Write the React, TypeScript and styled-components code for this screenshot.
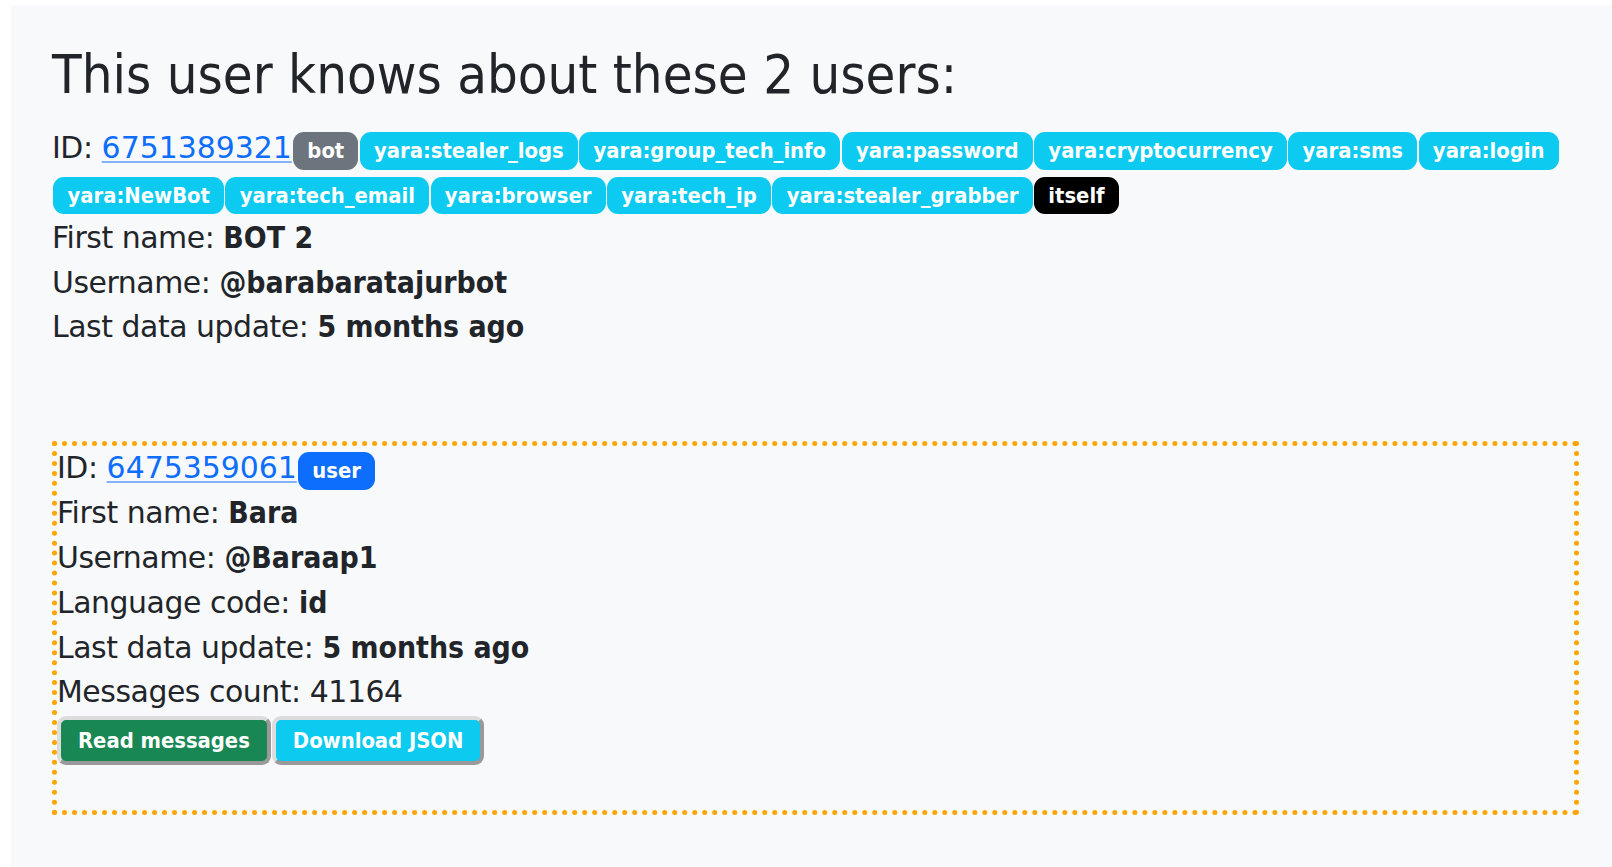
import React from 'react';
import styled, { createGlobalStyle, css } from 'styled-components';

const GlobalStyle = createGlobalStyle`
  html, body {
    margin: 0;
    padding: 0;
    background: #ffffff;
  }
  body {
    font-family: "DejaVu Sans", "Noto Sans", sans-serif;
    color: #212529;
  }
  * { box-sizing: border-box; }
`;

const boldFace = css`
  font-family: "DejaVu Sans Condensed", "DejaVu Sans", sans-serif;
  font-stretch: condensed;
  font-weight: 700;
  letter-spacing: 0;
`;

const Page = styled.main`
  margin: 5px 0 0 11px;
  min-height: calc(100vh - 5px);
  background: #f8f9fa;
  padding: 37px 33px 0 41px;
  font-size: 29.9px;
  line-height: 44.85px;
  letter-spacing: -0.45px;
`;

const Heading = styled.h2`
  margin: 0 0 19px;
  font-family: "DejaVu Sans Condensed", "DejaVu Sans", sans-serif;
  font-stretch: condensed;
  font-size: 54px;
  line-height: 65px;
  font-weight: 400;
  letter-spacing: 0;
`;

const UserBlock = styled.section<{ $framed?: boolean }>`
  ${(p) =>
    p.$framed
      ? css`
          border: 5px dotted #ffa500;
          padding-bottom: 45px;
        `
      : css`
          margin-bottom: 91px;
        `}
`;

const Field = styled.div``;

const Value = styled.b`
  ${boldFace}
`;

const IdLink = styled.a`
  color: #0d6efd;
  letter-spacing: 0;
  text-decoration: underline;
  text-decoration-color: rgba(13, 110, 253, 0.5);
  text-decoration-thickness: 2px;
  text-underline-offset: 3px;
`;

type Tone = 'secondary' | 'info' | 'dark' | 'primary';

const toneColor: Record<Tone, string> = {
  secondary: '#6c757d',
  info: '#0dcaf0',
  dark: '#000000',
  primary: '#0d6efd',
};

const Badge = styled.span<{ $tone: Tone }>`
  display: inline-block;
  margin-left: 1.3px;
  padding: 7.75px 14.25px;
  ${boldFace}
  font-size: 21.8px;
  line-height: 1;
  color: #ffffff;
  text-align: center;
  white-space: nowrap;
  vertical-align: baseline;
  border-radius: 11px;
  background: ${(p) => toneColor[p.$tone]};
`;

const ButtonRow = styled.div`
  display: flex;
  gap: 1px;
  margin-top: 1px;
`;

type Variant = 'success' | 'info';

const ActionButton = styled.button<{ $variant: Variant }>`
  height: 49px;
  padding: 0 17px;
  ${boldFace}
  font-size: 21.8px;
  line-height: 1;
  color: #ffffff;
  background: ${(p) => (p.$variant === 'success' ? '#198754' : '#0dcaf0')};
  border-style: solid;
  border-width: 4px;
  border-color: #dcdcdc #999999 #999999 #dcdcdc;
  border-radius: 9px;
  cursor: pointer;
`;

const botTags: { label: string; tone: Tone }[] = [
  { label: 'bot', tone: 'secondary' },
  { label: 'yara:stealer_logs', tone: 'info' },
  { label: 'yara:group_tech_info', tone: 'info' },
  { label: 'yara:password', tone: 'info' },
  { label: 'yara:cryptocurrency', tone: 'info' },
  { label: 'yara:sms', tone: 'info' },
  { label: 'yara:login', tone: 'info' },
  { label: 'yara:NewBot', tone: 'info' },
  { label: 'yara:tech_email', tone: 'info' },
  { label: 'yara:browser', tone: 'info' },
  { label: 'yara:tech_ip', tone: 'info' },
  { label: 'yara:stealer_grabber', tone: 'info' },
  { label: 'itself', tone: 'dark' },
];

export default function App() {
  return (
    <>
      <GlobalStyle />
      <Page>
        <Heading>This user knows about these 2 users:</Heading>

        <UserBlock>
          <Field>
            ID: <IdLink href="#">6751389321</IdLink>
            {botTags.map((t) => (
              <Badge key={t.label} $tone={t.tone}>
                {t.label}
              </Badge>
            ))}
          </Field>
          <Field>
            First name: <Value>BOT 2</Value>
          </Field>
          <Field>
            Username: <Value>@barabaratajurbot</Value>
          </Field>
          <Field>
            Last data update: <Value>5 months ago</Value>
          </Field>
        </UserBlock>

        <UserBlock $framed>
          <Field>
            ID: <IdLink href="#">6475359061</IdLink>
            <Badge $tone="primary">user</Badge>
          </Field>
          <Field>
            First name: <Value>Bara</Value>
          </Field>
          <Field>
            Username: <Value>@Baraap1</Value>
          </Field>
          <Field>
            Language code: <Value>id</Value>
          </Field>
          <Field>
            Last data update: <Value>5 months ago</Value>
          </Field>
          <Field>Messages count: 41164</Field>
          <ButtonRow>
            <ActionButton $variant="success">Read messages</ActionButton>
            <ActionButton $variant="info">Download JSON</ActionButton>
          </ButtonRow>
        </UserBlock>
      </Page>
    </>
  );
}
